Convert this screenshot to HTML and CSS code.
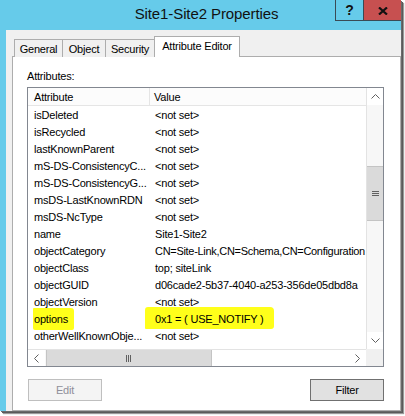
FILE: index.html
```html
<!DOCTYPE html>
<html>
<head>
<meta charset="utf-8">
<link rel="stylesheet" href="styles.css">
</head>
<body>
<div class="window">
  <div class="titlebar">
    <div class="title">Site1-Site2 Properties</div>
    <div class="caption">
      <div class="cbtn help">?</div>
      <div class="cbtn close"><svg width="10" height="8" viewBox="0 0 10 8"><path d="M1 0.5 L9 7.5 M9 0.5 L1 7.5" stroke="#111" stroke-width="2.2" fill="none"/></svg></div>
    </div>
  </div>
  <div class="client">
    <div class="tabs">
      <div class="tab t-general">General</div>
      <div class="tab t-object">Object</div>
      <div class="tab t-security">Security</div>
      <div class="tab active">Attribute Editor</div>
    </div>
    <div class="panel">
      <div class="label">Attributes:</div>
      <div class="list">
        <div class="content">
          <div class="row head"><div class="c1">Attribute</div><div class="c2">Value</div></div>
          <div class="row"><div class="c1">isDeleted</div><div class="c2">&lt;not set&gt;</div></div>
          <div class="row"><div class="c1">isRecycled</div><div class="c2">&lt;not set&gt;</div></div>
          <div class="row"><div class="c1">lastKnownParent</div><div class="c2">&lt;not set&gt;</div></div>
          <div class="row"><div class="c1">mS-DS-ConsistencyC...</div><div class="c2">&lt;not set&gt;</div></div>
          <div class="row"><div class="c1">mS-DS-ConsistencyG...</div><div class="c2">&lt;not set&gt;</div></div>
          <div class="row"><div class="c1">msDS-LastKnownRDN</div><div class="c2">&lt;not set&gt;</div></div>
          <div class="row"><div class="c1">msDS-NcType</div><div class="c2">&lt;not set&gt;</div></div>
          <div class="row"><div class="c1">name</div><div class="c2">Site1-Site2</div></div>
          <div class="row"><div class="c1">objectCategory</div><div class="c2 tight">CN=Site-Link,CN=Schema,CN=Configuration</div></div>
          <div class="row"><div class="c1">objectClass</div><div class="c2">top; siteLink</div></div>
          <div class="row"><div class="c1">objectGUID</div><div class="c2">d06cade2-5b37-4040-a253-356de05dbd8a</div></div>
          <div class="row"><div class="c1">objectVersion</div><div class="c2">&lt;not set&gt;</div></div>
          <div class="row"><div class="c1"><span class="mark mark1">options</span></div><div class="c2"><span class="mark mark2">0x1 = ( USE_NOTIFY )</span></div></div>
          <div class="row"><div class="c1">otherWellKnownObje...</div><div class="c2">&lt;not set&gt;</div></div>
        </div>
        <div class="vscroll">
          <div class="sbtn"><svg width="9" height="5" viewBox="0 0 9 5"><path d="M0.5 4.5 L4.5 0.5 L8.5 4.5" stroke="#606060" fill="none"/></svg></div>
          <div class="vtrack1"></div>
          <div class="vthumb"><svg width="7" height="6" viewBox="0 0 7 6"><path d="M0 0.5 H7 M0 2.5 H7 M0 4.5 H7" stroke="#606060" fill="none"/></svg></div>
          <div class="vtrack2"></div>
          <div class="sbtn"><svg width="9" height="5" viewBox="0 0 9 5"><path d="M0.5 0.5 L4.5 4.5 L8.5 0.5" stroke="#606060" fill="none"/></svg></div>
        </div>
        <div class="hscroll">
          <div class="sbtn"><svg width="5" height="9" viewBox="0 0 5 9"><path d="M4.5 0.5 L0.5 4.5 L4.5 8.5" stroke="#606060" fill="none"/></svg></div>
          <div class="hthumb"><svg width="6" height="7" viewBox="0 0 6 7"><path d="M0.5 0 V7 M2.5 0 V7 M4.5 0 V7" stroke="#606060" fill="none"/></svg></div>
          <div class="htrack"></div>
          <div class="sbtn"><svg width="5" height="9" viewBox="0 0 5 9"><path d="M0.5 0.5 L4.5 4.5 L0.5 8.5" stroke="#606060" fill="none"/></svg></div>
        </div>
        <div class="corner"></div>
      </div>
      <div class="buttons">
        <div class="btn disabled">Edit</div>
        <div class="btn default">Filter</div>
      </div>
    </div>
  </div>
</div>
</body>
</html>
```
FILE: styles.css
```css
html, body {
  margin: 0;
  padding: 0;
}
body {
  width: 405px;
  height: 416px;
  background: #ffffff;
  overflow: hidden;
  font-family: "Liberation Sans", Arial, sans-serif;
  font-size: 11px;
  letter-spacing: -0.2px;
  color: #000;
}
.window {
  width: 401px;
  height: 411px;
  background: #66cbea;
  display: flex;
  flex-direction: column;
  box-shadow: 1px 1px 0 #6a6a6a, 2px 2px 0 #5a5a5a, 3px 3px 1px #9a9a9a;
}
.titlebar {
  flex: none;
  height: 30px;
  display: grid;
  grid-template-columns: 1fr auto;
  grid-template-rows: 30px;
}
.title {
  grid-area: 1 / 1 / 2 / 3;
  text-align: center;
  padding-left: 12px;
  font-size: 15px;
  line-height: 28px;
  letter-spacing: -0.1px;
  color: #111;
}
.caption {
  grid-area: 1 / 2 / 2 / 3;
  align-self: start;
  display: flex;
}
.cbtn {
  height: 20px;
  border-left: 1px solid #3a4a55;
  border-bottom: 1px solid #3a4a55;
  display: flex;
  align-items: center;
  justify-content: center;
}
.help {
  width: 27px;
  font-weight: bold;
  font-size: 14px;
  letter-spacing: 0;
  color: #111;
}
.close {
  width: 38px;
  background: #c75050;
  padding-top: 1px;
  box-sizing: border-box;
  height: 21px;
}
.client {
  flex: 1;
  margin-left: 6px;
  background: #f0f0f0;
  padding: 7px 0 0 6px;
  display: flex;
  flex-direction: column;
}
.tabs {
  flex: none;
  height: 20px;
  display: flex;
  align-items: flex-end;
  padding-left: 2px;
  margin-bottom: -1px;
  position: relative;
  z-index: 1;
}
.tab {
  box-sizing: border-box;
  height: 18px;
  border: 1px solid #adadad;
  border-bottom: none;
  background: #f0f0f0;
  display: flex;
  align-items: center;
  justify-content: center;
  margin-left: -1px;
  padding-top: 1px;
}
.t-general { width: 49px; margin-left: 0; }
.t-object { width: 44px; }
.t-security { width: 50px; }
.tab.active {
  width: 86px;
  height: 21px;
  background: #fff;
  padding-top: 0;
  padding-bottom: 2px;
  position: relative;
}
.panel {
  flex: 1;
  width: 389px;
  box-sizing: border-box;
  background: #fff;
  border: 1px solid #adadad;
  padding: 12px 0 0 14px;
}
.label {
  line-height: 14px;
  margin-bottom: 4px;
}
.list {
  width: 357px;
  height: 280px;
  box-sizing: border-box;
  border: 1px solid #828790;
  display: grid;
  grid-template-columns: 338px 17px;
  grid-template-rows: 261px 17px;
}
.content {
  overflow: hidden;
}
.row {
  display: flex;
  height: 17px;
  box-sizing: border-box;
  padding-top: 1px;
  line-height: 16px;
  white-space: nowrap;
}
.c1 {
  flex: none;
  width: 116px;
  padding-left: 6px;
}
.c2 {
  flex: none;
  padding-left: 5px;
}
.c2.tight {
  letter-spacing: -0.3px;
}
.row.head {
  background: #fcfcfc;
  border-bottom: 1px solid #e5e5e5;
  height: 18px;
  padding-top: 1px;
  line-height: 16px;
}
.row.head .c1 {
  width: 115px;
  border-right: 1px solid #e5e5e5;
  margin-top: -1px;
  padding-top: 1px;
}
.row.head .c2 {
  padding-left: 4px;
}
.mark {
  display: inline-block;
  background: #ffff1a;
}
.mark1 {
  padding: 3px 6px 3px 1px;
  margin: -3px -6px -3px -1px;
  border-radius: 1px 3px 2px 2px;
}
.mark2 {
  padding: 4px 10px 2px 10px;
  margin: -4px -10px -2px -10px;
  border-radius: 3px 4px 3px 1px;
}
.vscroll {
  display: flex;
  flex-direction: column;
  background: #f7f7f7;
  border-left: 1px solid #e3e3e3;
  box-sizing: border-box;
}
.hscroll {
  display: flex;
  background: #f7f7f7;
  border-top: 1px solid #e3e3e3;
  box-sizing: border-box;
}
.sbtn {
  flex: none;
  width: 16px;
  height: 16px;
  background: #fff;
  display: flex;
  align-items: center;
  justify-content: center;
}
.vscroll .sbtn { width: 16px; height: 17px; }
.hscroll .sbtn { width: 17px; height: 16px; }
.vtrack1 { flex: none; height: 61px; }
.vthumb {
  flex: none;
  height: 55px;
  background: #dadada;
  border-top: 1px solid #c4c4c4;
  border-bottom: 1px solid #c4c4c4;
  box-sizing: border-box;
  display: flex;
  align-items: center;
  justify-content: center;
}
.vtrack2 { flex: 1; }
.hthumb {
  flex: none;
  width: 166px;
  margin-left: 1px;
  background: #dadada;
  border-left: 1px solid #c4c4c4;
  border-right: 1px solid #c4c4c4;
  box-sizing: border-box;
  display: flex;
  align-items: center;
  justify-content: center;
}
.htrack { flex: 1; background: #fff; }
.corner {
  background: #f0f0f0;
}
.buttons {
  width: 357px;
  display: flex;
  justify-content: space-between;
  margin-top: 12px;
  padding-left: 1px;
  box-sizing: border-box;
}
.btn {
  width: 74px;
  height: 22px;
  box-sizing: border-box;
  display: flex;
  align-items: center;
  justify-content: center;
}
.btn.disabled {
  background: #f4f4f4;
  border: 1px solid #bfbfbf;
  color: #8f8f9a;
}
.btn.default {
  background: #e1e1e1;
  border: 1px solid #707070;
}
```
